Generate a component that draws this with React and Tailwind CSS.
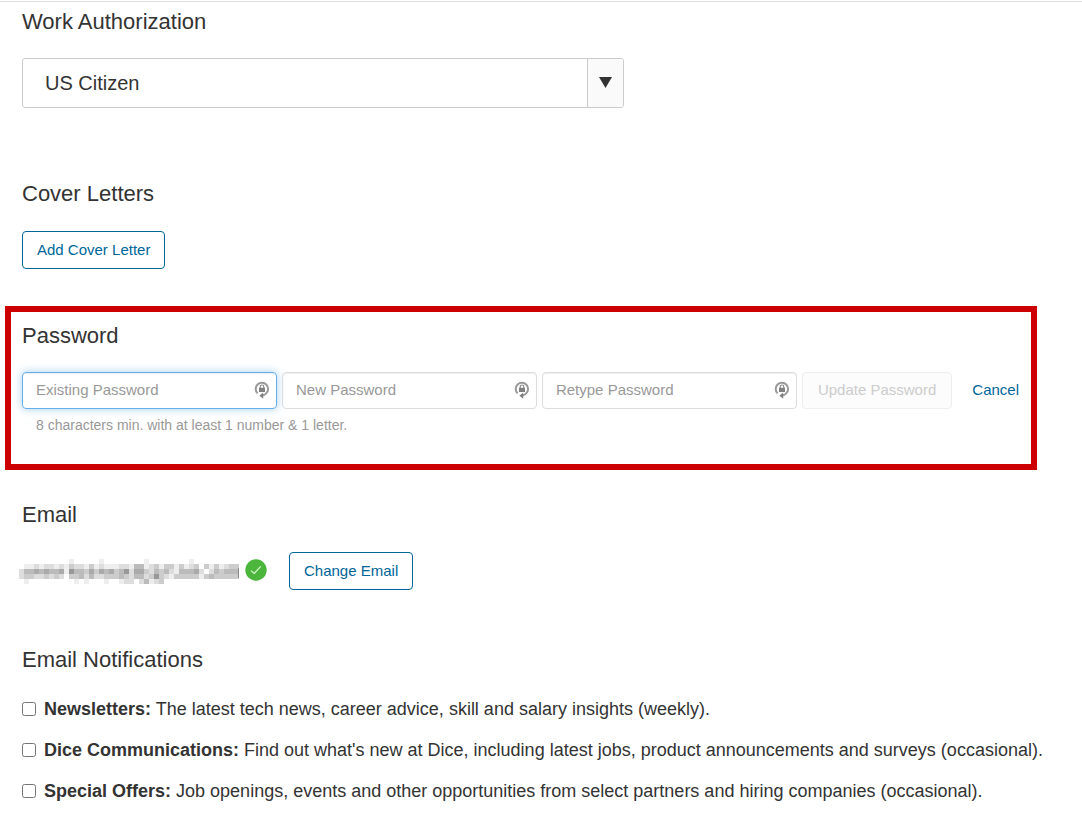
import { useState } from "react";

const NOTIFICATIONS = [
  { id: "newsletters", title: "Newsletters:", text: "The latest tech news, career advice, skill and salary insights (weekly)." },
  { id: "communications", title: "Dice Communications:", text: "Find out what's new at Dice, including latest jobs, product announcements and surveys (occasional)." },
  { id: "offers", title: "Special Offers:", text: "Job openings, events and other opportunities from select partners and hiring companies (occasional)." },
];

const PASSWORD_FIELDS = [
  { id: "existing", label: "Existing Password", active: true },
  { id: "new", label: "New Password" },
  { id: "retype", label: "Retype Password" },
];

// Grey levels of the masked address, one hex digit per 5px block (f = white, 0 = black)
const MASK_ROWS = [
  "ffffffffffefffffeffffffffeffffffffefffffffff",
  "feededdedecddecedeeeddebbedceccecedcfcecedcc",
  "dbbababbae9bbcacabacb9daacdbcbdebbbadfdbcbbb",
  "dccddcdcdfccbdbddcccbcdbbdc9cdecccccecbccccc",
  "fefffffffffefefffeffeddfdbedcfffffffffffffff",
];

function SectionTitle({ children }) {
  return <h2 className="text-[22px] leading-7 text-[#333]">{children}</h2>;
}

function OutlineButton({ children }) {
  return (
    <button className="h-[38px] px-[14px] rounded border border-[#006699] bg-white text-[15px] text-[#006699]">
      {children}
    </button>
  );
}

function LockIcon() {
  return (
    <svg className="w-4 h-[18px]" viewBox="0 0 16 18" fill="none" aria-hidden="true">
      <path d="M3.6 12.4A6.2 6.2 0 1 1 12 12.6Q10.6 14 8.6 14.4" stroke="#999" strokeWidth="2" />
      <path d="M9.2 11.6v6.2L5.4 14.7z" fill="#808080" />
      <path d="M6.2 7.2V5.8a1.8 1.8 0 0 1 3.6 0v1.4" stroke="#8c8c8c" strokeWidth="1.2" />
      <rect x="5" y="6.8" width="6" height="4.2" fill="#808080" />
    </svg>
  );
}

function MaskedEmail() {
  return (
    <svg className="w-[220px] h-[25px]" viewBox="0 0 220 25" shapeRendering="crispEdges" role="img" aria-label="Hidden email address">
      {MASK_ROWS.map((row, y) =>
        row.split("").map((level, x) => {
          const v = parseInt(level, 16) * 17;
          return <rect key={`${x}-${y}`} x={x * 5} y={y * 5} width="5" height="5" fill={`rgb(${v},${v},${v})`} />;
        })
      )}
      <rect x="219" y="9" width="1" height="10" fill="#888" />
    </svg>
  );
}

function PasswordField({ id, label, active }) {
  const [value, setValue] = useState("");

  return (
    <div className="relative flex-1">
      <input
        id={id}
        type="password"
        aria-label={label}
        placeholder={label}
        value={value}
        onChange={(e) => setValue(e.target.value)}
        className={
          active
            ? "block w-full h-[37px] pl-[13px] pr-8 pb-[2px] rounded border border-[#66afe9] text-[15px] outline-none placeholder:text-[#999] shadow-[inset_0_1px_1px_rgba(0,0,0,0.075),0_0_8px_rgba(102,175,233,0.6)]"
            : "block w-full h-[37px] pl-[13px] pr-8 pb-[2px] rounded border border-[#ddd] text-[15px] outline-none placeholder:text-[#999] shadow-[inset_0_1px_1px_rgba(0,0,0,0.075)]"
        }
      />
      <span className="absolute right-[7px] top-[9px]">
        <LockIcon />
      </span>
    </div>
  );
}

export default function App() {
  return (
    <div className="bg-white pt-px" style={{ fontFamily: '"Liberation Sans", Arial, sans-serif' }}>
      <main className="border-t border-[#ddd] text-[#333]">
        <section className="px-[22px] pt-[6px]">
          <SectionTitle>Work Authorization</SectionTitle>
          <div className="relative mt-[22px] max-w-[602px]">
            <select
              aria-label="Work Authorization"
              className="block w-full h-[50px] pl-[22px] pr-12 appearance-none rounded-[3px] border border-[#ccc] bg-white text-[20px] text-[#333]"
            >
              <option>US Citizen</option>
            </select>
            <span className="pointer-events-none absolute right-px inset-y-px w-9 pb-[2px] flex items-center justify-center rounded-r-[2px] border-l border-[#ccc] bg-[#fafafa]">
              <svg className="w-[13px] h-[11px]" viewBox="0 0 13 11">
                <path d="M0 0h13L6.5 11z" fill="#333" />
              </svg>
            </span>
          </div>
        </section>

        <section className="px-[22px] mt-[72px]">
          <SectionTitle>Cover Letters</SectionTitle>
          <div className="mt-[23px]">
            <OutlineButton>Add Cover Letter</OutlineButton>
          </div>
        </section>

        <section className="mt-[37px] ml-[5px] mr-[45px] border-6 border-[#cc0000] pl-[11px] pr-3 pt-[10px] pb-[29px]">
          <SectionTitle>Password</SectionTitle>
          <form className="mt-[22px] flex items-center" onSubmit={(e) => e.preventDefault()}>
            <div className="flex flex-1 gap-[5px]">
              {PASSWORD_FIELDS.map((f) => (
                <PasswordField key={f.id} {...f} />
              ))}
            </div>
            <button disabled className="ml-[5px] h-[37px] px-[15px] rounded border border-[#eee] bg-[#fcfcfc] text-[15px] text-[#ccc]">
              Update Password
            </button>
            <a href="#cancel" className="ml-5 text-[15px] text-[#006699]">Cancel</a>
          </form>
          <p className="mt-[6px] ml-[14px] text-[14px] leading-5 text-[#999]">8 characters min. with at least 1 number &amp; 1 letter.</p>
        </section>

        <section className="px-[22px] mt-[31px]">
          <SectionTitle>Email</SectionTitle>
          <div className="mt-[23px] -ml-[3px] flex items-center">
            <MaskedEmail />
            <svg className="ml-[6px] mb-[3px] w-[22px] h-[22px]" viewBox="0 0 22 22" role="img" aria-label="Verified">
              <circle cx="11" cy="11" r="10.7" fill="#4cb63c" />
              <path d="M6 11.6l3.2 2.8 6.6-7" fill="none" stroke="#d9f5d2" strokeWidth="1.2" />
            </svg>
            <span className="ml-[22px]">
              <OutlineButton>Change Email</OutlineButton>
            </span>
          </div>
        </section>

        <section className="px-[22px] mt-14">
          <SectionTitle>Email Notifications</SectionTitle>
          <ul className="mt-[22px]">
            {NOTIFICATIONS.map((n) => (
              <li key={n.id} className="mb-[15px]">
                <label className="flex items-center gap-2 text-[18px] leading-[26px]">
                  <input type="checkbox" className="size-[14px] m-0 shrink-0" />
                  <span>
                    <b>{n.title}</b> {n.text}
                  </span>
                </label>
              </li>
            ))}
          </ul>
        </section>
      </main>
    </div>
  );
}
